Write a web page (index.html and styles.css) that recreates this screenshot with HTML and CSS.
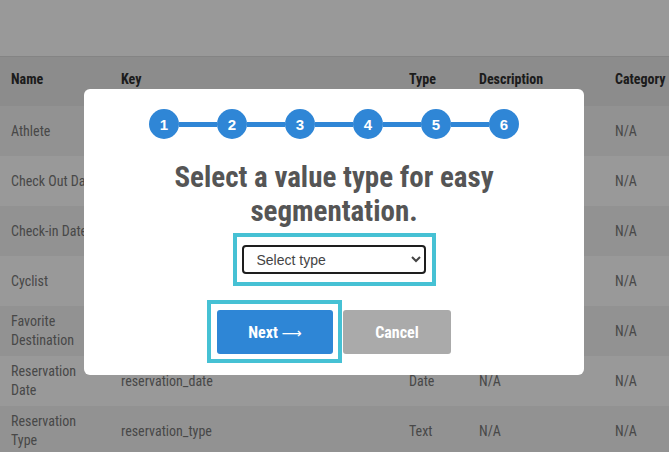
FILE: index.html
```html
<!DOCTYPE html>
<html lang="en">
<head>
<meta charset="utf-8">
<title>Attributes</title>
<link rel="stylesheet" href="styles.css">
</head>
<body>
<div class="page">
  <header class="topbar"></header>
  <table class="attrs">
    <colgroup>
      <col class="c-name"><col class="c-key"><col class="c-type"><col class="c-desc"><col class="c-cat">
    </colgroup>
    <thead>
      <tr><th>Name</th><th>Key</th><th>Type</th><th>Description</th><th>Category</th></tr>
    </thead>
    <tbody>
      <tr><td>Athlete</td><td>athlete</td><td>Boolean</td><td>N/A</td><td>N/A</td></tr>
      <tr><td>Check Out Date</td><td>check_out_date</td><td>Date</td><td>N/A</td><td>N/A</td></tr>
      <tr><td>Check-in Date</td><td>check_in_date</td><td>Date</td><td>N/A</td><td>N/A</td></tr>
      <tr><td>Cyclist</td><td>cyclist</td><td>Boolean</td><td>N/A</td><td>N/A</td></tr>
      <tr><td>Favorite Destination</td><td>favorite_destination</td><td>Text</td><td>N/A</td><td>N/A</td></tr>
      <tr><td>Reservation Date</td><td>reservation_date</td><td>Date</td><td>N/A</td><td>N/A</td></tr>
      <tr><td>Reservation Type</td><td>reservation_type</td><td>Text</td><td>N/A</td><td>N/A</td></tr>
    </tbody>
  </table>
</div>

<div class="overlay">
  <div class="modal">
    <ol class="stepper">
      <li class="step">1</li><li class="link"></li>
      <li class="step">2</li><li class="link"></li>
      <li class="step">3</li><li class="link"></li>
      <li class="step">4</li><li class="link"></li>
      <li class="step">5</li><li class="link"></li>
      <li class="step">6</li>
    </ol>
    <h2 class="title">Select a value type for easy segmentation.</h2>
    <div class="select-ring">
      <select class="type-select">
        <option>Select type</option>
        <option>Text</option>
        <option>Date</option>
        <option>Number</option>
        <option>Boolean</option>
      </select>
    </div>
    <div class="actions">
      <div class="btn-ring">
        <button class="btn btn-next">Next <span class="arrow">&#10230;</span></button>
      </div>
      <button class="btn btn-cancel">Cancel</button>
    </div>
  </div>
</div>
</body>
</html>
```
FILE: styles.css
```css
* { box-sizing: border-box; }

html, body {
  margin: 0;
  padding: 0;
  background: #ffffff;
}

body {
  font-family: "Roboto", "Liberation Sans Narrow", "Liberation Sans", sans-serif;
  font-stretch: 75%;
  font-size: 14px;
  color: #787878;
}

.topbar {
  height: 57px;
  border-bottom: 1px solid #dcdcdc;
  background: #ffffff;
}

.attrs {
  width: 100%;
  border-collapse: collapse;
  table-layout: fixed;
}

.c-name { width: 110px; }
.c-key { width: 288px; }
.c-type { width: 70px; }
.c-desc { width: 136px; }
.c-cat { width: auto; }

.attrs th,
.attrs td {
  text-align: left;
  padding: 0 8px 0 11px;
  line-height: 19px;
  vertical-align: middle;
}

.attrs th {
  height: 49px;
  padding-bottom: 4px;
  background: #e9e9e9;
  color: #303030;
  font-weight: 700;
  font-size: 14px;
}

.attrs td {
  height: 50px;
}

.attrs tbody tr:nth-child(odd) td { background: #f4f4f4; }
.attrs tbody tr:nth-child(even) td { background: #ffffff; }

.overlay {
  position: fixed;
  inset: 0;
  background: rgba(0, 0, 0, 0.4);
  display: flex;
  justify-content: flex-start;
  align-items: flex-start;
  padding: 89px 0 0 84px;
}

.modal {
  width: 500px;
  background: #ffffff;
  border-radius: 6px;
  padding: 20px 0 21px;
  display: flex;
  flex-direction: column;
  align-items: center;
}

.stepper {
  list-style: none;
  margin: 0;
  padding: 0;
  display: flex;
  align-items: center;
}

.step {
  width: 30px;
  height: 30px;
  border-radius: 50%;
  background: #2f86d6;
  color: #ffffff;
  font-family: "Liberation Sans", Arial, sans-serif;
  font-stretch: normal;
  font-weight: 700;
  font-size: 15px;
  display: flex;
  align-items: center;
  justify-content: center;
}

.link {
  width: 38px;
  height: 5px;
  background: #2f86d6;
}

.title {
  margin: 21px 0 0;
  width: 360px;
  text-align: center;
  font-size: 29px;
  line-height: 34px;
  font-weight: 700;
  color: #555555;
}

.select-ring {
  margin-top: 5px;
  border: 4px solid #46c1d4;
  padding: 8px 6px 8px 5px;
}

.type-select {
  display: block;
  width: 184px;
  height: 29px;
  border: 2px solid #1e1e1e;
  border-radius: 4px;
  background: #ffffff;
  padding: 0 0 0 9px;
  font-family: "Liberation Sans", Arial, sans-serif;
  font-stretch: normal;
  font-size: 14px;
  color: #444444;
}

.actions {
  margin-top: 24px;
  display: flex;
  align-items: flex-start;
  gap: 10px;
}

.btn-ring {
  margin: -10px -9px -9px -10px;
  border: 4px solid #46c1d4;
  padding: 6px 5px 5px 6px;
}

.btn {
  display: block;
  height: 44px;
  border: 0;
  border-radius: 3px;
  color: #ffffff;
  font-family: inherit;
  font-stretch: 75%;
  font-weight: 700;
  font-size: 16px;
  padding: 0;
}

.arrow {
  font-family: "DejaVu Sans", sans-serif;
  font-stretch: normal;
  font-weight: 400;
  font-size: 14px;
}

.btn-next {
  width: 116px;
  background: #2e86d6;
}

.btn-cancel {
  width: 108px;
  background: #aaaaaa;
}
```
